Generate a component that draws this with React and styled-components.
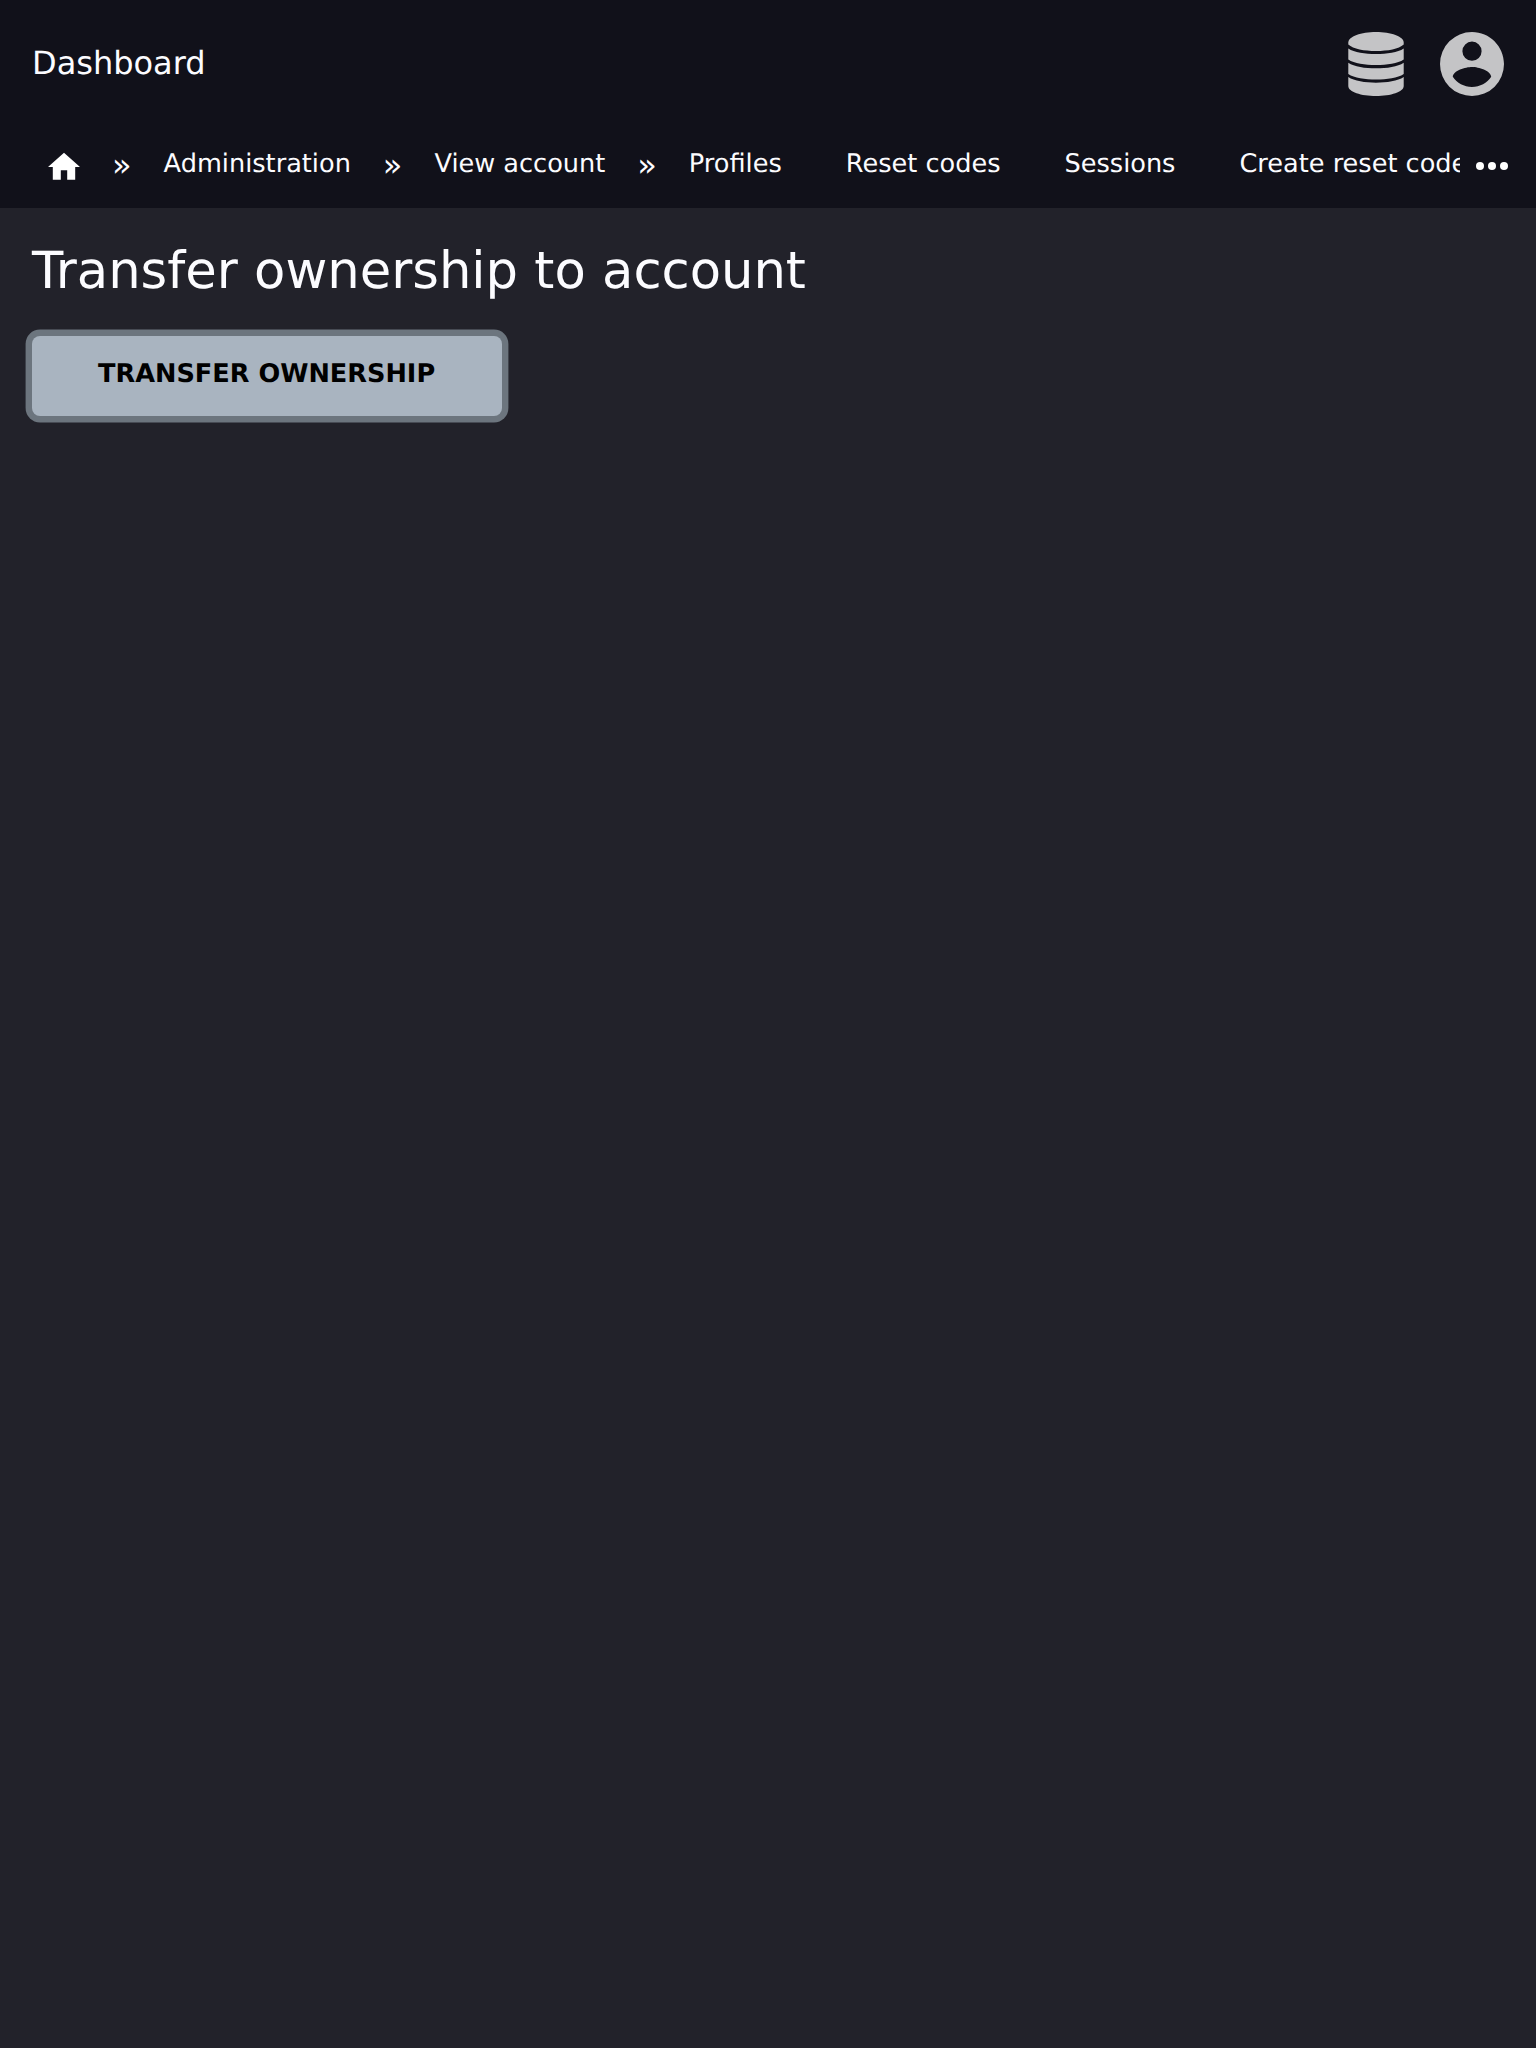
import React from 'react';
import styled, { createGlobalStyle } from 'styled-components';

const GlobalStyle = createGlobalStyle`
  *, *::before, *::after { box-sizing: border-box; }
  body {
    margin: 0;
    min-height: 100vh;
    background: #22222a;
    color: #fcfcff;
    font-family: "DejaVu Sans", sans-serif;
    font-size: 32px;
    text-rendering: geometricPrecision;
  }
`;

const Header = styled.header`
  background: #11111a;
  height: 208px;
`;

const TopBar = styled.div`
  display: flex;
  align-items: center;
  justify-content: space-between;
  height: 128px;
  padding: 0 32px;
`;

const Brand = styled.a`
  line-height: 40px;
  padding-bottom: 2px;
`;

const Actions = styled.div`
  display: flex;
  align-items: center;
  gap: 36px;
  color: #c4c4c6;
`;

const Icon = styled.svg`
  display: block;
  flex: none;
  width: ${(p) => p.$w}px;
  height: ${(p) => p.$h}px;
  fill: currentColor;
`;

const NavBar = styled.nav`
  display: flex;
  height: 80px;
  font-size: 25.6px;
  line-height: 30px;
`;

const NavItems = styled.div`
  display: flex;
  flex: 1;
  min-width: 0;
  overflow: hidden;
  padding-left: 16px;
`;

const HomeLink = styled.a`
  flex: none;
  padding: 24px 32px 0;
  color: #fff;
`;

const NavLink = styled.a`
  flex: none;
  padding: 21px 32px 0;
  white-space: nowrap;
`;

const Separator = styled.span`
  flex: none;
  padding-top: 17px;
  font-size: 32px;
  line-height: 40px;
`;

const More = styled.button`
  flex: none;
  width: 76px;
  padding: 0 0 4px 16px;
  border: 0;
  background: none;
  color: #fff;
`;

const Main = styled.main`
  padding: 33px 32px 32px;
`;

const Title = styled.h1`
  margin: 0 0 35px;
  font-size: 51.2px;
  font-weight: 400;
  line-height: 60px;
`;

const PrimaryButton = styled.button`
  display: block;
  height: 80px;
  padding: 0 67px 4px 66px;
  border: 0;
  border-radius: 8px;
  background: #a9b4c0;
  box-shadow: 0 0 0 6.4px #6c757e;
  color: #000;
  font: 700 25.6px/30px "DejaVu Sans", sans-serif;
  text-rendering: geometricPrecision;
  text-transform: uppercase;
`;

export default function App() {
  return (
    <>
      <GlobalStyle />
      <Header>
        <TopBar>
          <Brand>Dashboard</Brand>
          <Actions>
            <Icon $w={56} $h={64} viewBox="-0.3 0 56.6 64" preserveAspectRatio="none">
              <path d="M28 0C43 0 56 4.5 56 10.5V12.5C51 17 40 19 28 19S5 17 0 12.5V10.5C0 4.5 13 0 28 0Z" />
              <path d="M0 16.5C6 20.5 17 22 28 22S50 20.5 56 16.5V27.5C50 31.5 39 33 28 33S6 31.5 0 27.5Z" />
              <path d="M0 30.7C6 34.7 17 36.3 28 36.3S50 34.7 56 30.7V42C50 46 39 47.5 28 47.5S6 46 0 42Z" />
              <path d="M0 45C6 49 17 50.7 28 50.7S50 49 56 45V54C56 60 43 64 28 64S0 60 0 54Z" />
            </Icon>
            <Icon $w={64} $h={64} viewBox="2 2 20 20">
              <path d="M12,19.2C9.5,19.2 7.29,17.92 6,16C6.03,14 10,12.9 12,12.9C14,12.9 17.97,14 18,16C16.71,17.92 14.5,19.2 12,19.2M12,5A3,3 0 0,1 15,8A3,3 0 0,1 12,11A3,3 0 0,1 9,8A3,3 0 0,1 12,5M12,2A10,10 0 0,0 2,12A10,10 0 0,0 12,22A10,10 0 0,0 22,12C22,6.47 17.5,2 12,2Z" />
            </Icon>
          </Actions>
        </TopBar>
        <NavBar>
          <NavItems>
            <HomeLink>
              <Icon $w={32} $h={28} viewBox="2 2.6 20 17.5">
                <path d="M10,20V14H14V20H19V12H22L12,3L2,12H5V20H10Z" />
              </Icon>
            </HomeLink>
            <Separator>»</Separator>
            <NavLink>Administration</NavLink>
            <Separator>»</Separator>
            <NavLink>View account</NavLink>
            <Separator>»</Separator>
            <NavLink>Profiles</NavLink>
            <NavLink>Reset codes</NavLink>
            <NavLink>Sessions</NavLink>
            <NavLink>Create reset code</NavLink>
          </NavItems>
          <More aria-label="More">
            <Icon $w={32} $h={8} viewBox="0 0 32 8">
              <circle cx="4" cy="4" r="4" />
              <circle cx="16" cy="4" r="4" />
              <circle cx="28" cy="4" r="4" />
            </Icon>
          </More>
        </NavBar>
      </Header>
      <Main>
        <Title>Transfer ownership to account</Title>
        <PrimaryButton>Transfer ownership</PrimaryButton>
      </Main>
    </>
  );
}
